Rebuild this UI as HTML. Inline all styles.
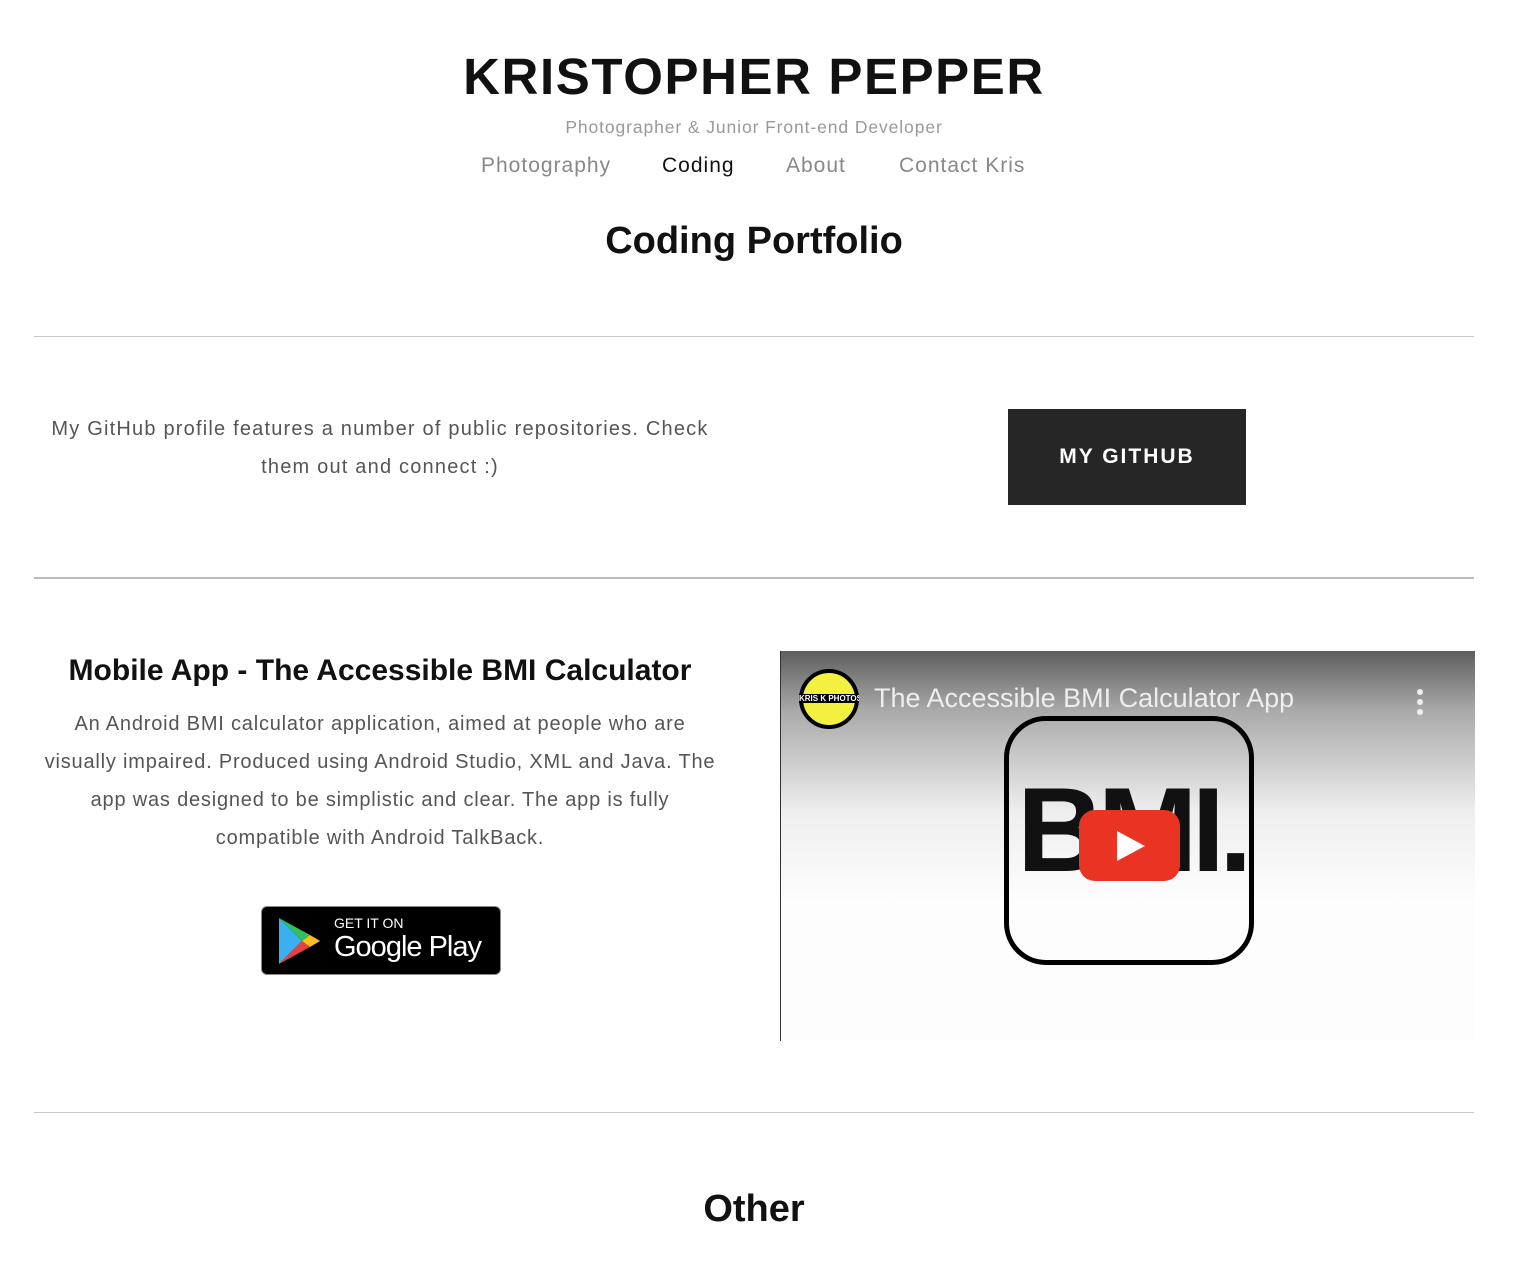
<!DOCTYPE html>
<html><head><meta charset="utf-8"><style>
*{margin:0;padding:0;box-sizing:border-box}
body{width:1520px;height:1272px;background:#fff;font-family:"Liberation Sans",sans-serif;position:relative;overflow:hidden;color:#111}
.a{position:absolute}
.c{text-align:center}
hr{position:absolute;left:34px;width:1440px;border:0;border-top:1px solid #c8c8c8}
.p{color:#555;font-size:20px;letter-spacing:1.2px}
</style></head><body>
<div class="a c" style="left:0;width:1508px;top:47px;font-size:51px;font-weight:bold;letter-spacing:1.6px">KRISTOPHER PEPPER</div>
<div class="a c" style="left:0;width:1508px;top:117px;font-size:17.5px;color:#999;letter-spacing:0.9px">Photographer &amp; Junior Front-end Developer</div>
<div class="a" style="left:481px;top:154px;font-size:21px;color:#888;letter-spacing:1px">Photography</div>
<div class="a" style="left:662px;top:154px;font-size:21px;color:#111;letter-spacing:1px">Coding</div>
<div class="a" style="left:786px;top:154px;font-size:21px;color:#888;letter-spacing:1px">About</div>
<div class="a" style="left:899px;top:154px;font-size:21px;color:#888;letter-spacing:1px">Contact Kris</div>
<div class="a c" style="left:0;width:1508px;top:220px;font-size:38px;font-weight:bold">Coding Portfolio</div>
<hr style="top:336px">
<div class="a c p" style="left:45px;width:670px;top:410px;line-height:38px">My GitHub profile features a number of public repositories. Check them out and connect :)</div>
<div class="a c" style="left:1008px;top:409px;width:238px;height:96px;background:#262626;color:#fff;font-weight:bold;font-size:21px;letter-spacing:2px;line-height:96px">MY GITHUB</div>
<hr style="top:577px;border-top:2px solid #bbb">
<div class="a c" style="left:30px;width:700px;top:654px;font-size:30px;font-weight:bold">Mobile App - The Accessible BMI Calculator</div>
<div class="a c p" style="left:38px;width:684px;top:705px;line-height:38px;letter-spacing:0.8px">An Android BMI calculator application, aimed at people who are visually impaired. Produced using Android Studio, XML and Java. The app was designed to be simplistic and clear. The app is fully compatible with Android TalkBack.</div>
<div class="a" style="left:261px;top:906px;width:240px;height:69px;background:#000;border-radius:6px;border:1px solid #888">
<svg class="a" style="left:14px;top:9px" width="46" height="50" viewBox="0 0 46 50"><polygon points="3,2 26,25 3,48" fill="#3ab0f0"/><polygon points="3,2 34,19 26,25" fill="#30c060"/><polygon points="3,48 26,25 34,31" fill="#e84040"/><polygon points="26,25 34,19 44,25 34,31" fill="#f8c020"/></svg>
<div class="a" style="left:72px;top:8px;color:#fff;font-size:14px">GET IT ON</div>
<div class="a" style="left:72px;top:24px;color:#fff;font-size:29px;letter-spacing:-1px">Google Play</div>
</div>
<div class="a" style="left:780px;top:651px;width:695px;height:390px;background:linear-gradient(#5e5e5e 0,#aaa 60px,#eee 160px,#fdfdfd 250px);border-left:1px solid #333;overflow:hidden">
<div class="a" style="left:18px;top:18px;width:60px;height:60px;border-radius:50%;background:#f4f040;border:4px solid #000"></div>
<div class="a" style="left:18px;top:43px;width:60px;color:#fff;font-size:8px;font-weight:bold;text-align:center;background:#000;white-space:nowrap;overflow:hidden">KRIS K PHOTOS</div>
<div class="a" style="left:93px;top:32px;color:#eee;font-size:27px">The Accessible BMI Calculator App</div>
<div class="a" style="left:636px;top:38px;width:6px;height:6px;border-radius:3px;background:#eee;box-shadow:0 10px 0 #eee,0 20px 0 #eee"></div>
<div class="a" style="left:223px;top:65px;width:250px;height:249px;border:5px solid #000;border-radius:42px"></div>
<div class="a" style="left:236px;top:110px;font-size:120px;font-weight:bold;letter-spacing:-6px">BMI.</div>
<div class="a" style="left:298px;top:159px;width:101px;height:71px;background:#e93323;border-radius:16px"></div>
<svg class="a" style="left:336px;top:180px" width="30" height="30"><polygon points="0,0 28,15 0,30" fill="#fff"/></svg>
</div>
<hr style="top:1112px">
<div class="a c" style="left:0;width:1508px;top:1188px;font-size:38px;font-weight:bold">Other</div>
</body></html>
